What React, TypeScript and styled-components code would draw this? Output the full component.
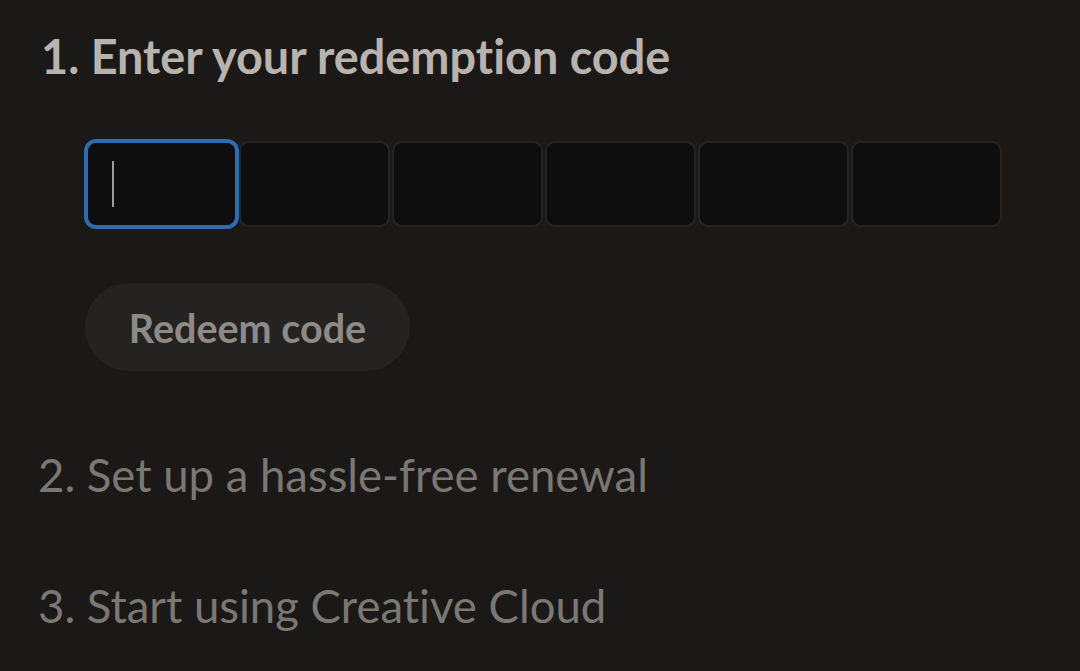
import styled, { createGlobalStyle } from "styled-components"

const Global = createGlobalStyle`
body {
  margin: 0;
  background: #1b1918;
  font-family: Lato, "Open Sans", sans-serif;
  font-variant-ligatures: none;
}
`

const Page = styled.div`
display: flex;
flex-direction: column;
padding: 29px 0 0 43px;
height: 671px;
box-sizing: border-box;
`

const StepTitle = styled.h2<{ $active?: boolean }>`
margin: 0;
font-size: ${(p) => (p.$active ? "46.8px" : "45.5px")};
line-height: 54px;
font-weight: ${(p) => (p.$active ? 700 : 400)};
color: ${(p) => (p.$active ? "#b9b3ad" : "#7b7773")};
margin-left: ${(p) => (p.$active ? "-2px" : "-5px")};
`

const StepBody = styled.div`
display: flex;
flex-direction: column;
align-items: flex-start;
padding: 58px 0 0 43px;
gap: 56px;
`

const CodeRow = styled.div`
display: grid;
grid-template-columns: repeat(6, 151px);
gap: 2px;
`

const CodeCell = styled.div<{ $focused?: boolean }>`
position: relative;
height: 86px;
box-sizing: border-box;
background: #0e0e0e;
border: 2px solid ${(p) => (p.$focused ? "#2e6cb2" : "#262423")};
border-radius: 10px;
box-shadow: ${(p) => (p.$focused ? "0 0 0 2px #2e6cb2" : "none")};
`

const Caret = styled.span`
position: absolute;
left: 24px;
top: 18px;
width: 2px;
height: 46px;
background: #9b9b9b;
`

const RedeemButton = styled.button`
height: 88px;
width: 325px;
margin-left: -1px;
border: none;
border-radius: 44px;
background: #252321;
color: #8e8a86;
font-family: Lato, "Open Sans", sans-serif;
font-size: 39.5px;
font-weight: 700;
cursor: pointer;
`

const NextSteps = styled.div`
display: flex;
flex-direction: column;
gap: 77px;
margin-top: 77px;
`

export default function App() {
  return (
    <>
      <Global />
      <Page>
        <StepTitle $active>1. Enter your redemption code</StepTitle>
        <StepBody>
          <CodeRow>
            {[0, 1, 2, 3, 4, 5].map((i) => (
              <CodeCell key={i} $focused={i === 0}>
                {i === 0 && <Caret />}
              </CodeCell>
            ))}
          </CodeRow>
          <RedeemButton>Redeem code</RedeemButton>
        </StepBody>
        <NextSteps>
          <StepTitle>2. Set up a hassle-free renewal</StepTitle>
          <StepTitle>3. Start using Creative Cloud</StepTitle>
        </NextSteps>
      </Page>
    </>
  )
}
